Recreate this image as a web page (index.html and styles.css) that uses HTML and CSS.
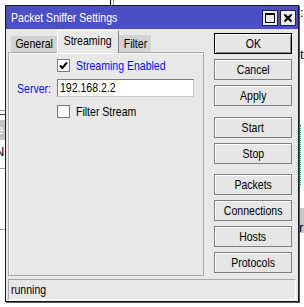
FILE: index.html
```html
<!DOCTYPE html>
<html>
<head>
<meta charset="utf-8">
<link rel="stylesheet" href="styles.css">
</head>
<body>
<div class="desktop">
  <div class="frag frag-topline"></div>
  <div class="frag frag-topline2"></div>
  <div class="frag frag-left-a"></div>
  <div class="frag frag-left-b">e</div>
  <div class="frag frag-left-c">N</div>
  <div class="frag frag-left-d"></div>
  <div class="frag frag-right-a">:</div>
  <div class="frag frag-right-b">t</div>
  <div class="frag frag-right-c"></div>
  <div class="frag frag-right-d">r</div>

  <div class="window">
    <div class="titlebar">
      <span class="title"><span class="t">Packet Sniffer Settings</span></span>
      <div class="tb-btns">
        <span class="tb-btn"><svg width="12" height="12" viewBox="0 0 12 12"><rect x="1.5" y="1.5" width="9" height="9" fill="none" stroke="#000" stroke-width="1"/><rect x="1" y="1" width="10" height="2" fill="#000"/></svg></span>
        <span class="tb-btn"><svg width="12" height="12" viewBox="0 0 12 12"><path d="M2.5 2.5 L9.5 9.5 M9.5 2.5 L2.5 9.5" stroke="#000" stroke-width="2.2" fill="none"/></svg></span>
      </div>
    </div>
    <div class="main">
      <div class="left">
        <div class="tabs">
          <div class="tab tab-general"><span class="tc">General</span></div>
          <div class="tab tab-active"><span class="tc">Streaming</span></div>
          <div class="tab tab-filter"><span class="tc">Filter</span></div>
        </div>
        <div class="panel">
          <div class="form">
            <span></span>
            <label class="check-row">
              <span class="checkbox"><svg width="11" height="11" viewBox="0 0 11 11"><path d="M2 5.5 L4.3 8 L9 2.5" stroke="#000" stroke-width="2" fill="none"/></svg></span>
              <span class="t blue">Streaming Enabled</span>
            </label>
            <span class="lbl"><span class="t blue">Server:</span></span>
            <div class="input"><span class="t">192.168.2.2</span></div>
            <span></span>
            <label class="check-row">
              <span class="checkbox"></span>
              <span class="t">Filter Stream</span>
            </label>
          </div>
        </div>
      </div>
      <div class="buttons">
        <div class="btn btn-default"><span class="tc">OK</span></div>
        <div class="btn"><span class="tc">Cancel</span></div>
        <div class="btn"><span class="tc">Apply</span></div>
        <div class="btn group"><span class="tc">Start</span></div>
        <div class="btn"><span class="tc">Stop</span></div>
        <div class="btn group2"><span class="tc">Packets</span></div>
        <div class="btn"><span class="tc">Connections</span></div>
        <div class="btn"><span class="tc">Hosts</span></div>
        <div class="btn"><span class="tc">Protocols</span></div>
      </div>
    </div>
    <div class="status"><span class="t">running</span></div>
  </div>
</div>
</body>
</html>
```

FILE: styles.css
```css
html, body {
  margin: 0;
  padding: 0;
  background: #ffffff;
}
.desktop {
  position: relative;
  width: 304px;
  height: 307px;
  overflow: hidden;
  font-family: "Liberation Sans", Arial, sans-serif;
  font-size: 13px;
  color: #000;
}
.t {
  display: inline-block;
  transform: scaleX(0.81);
  transform-origin: left center;
  white-space: nowrap;
}
.tc {
  display: inline-block;
  transform: scaleX(0.81);
  transform-origin: center center;
  white-space: nowrap;
}
.frag { position: absolute; font-size: 13px; line-height: 13px; }
.frag-topline { left: 110px; top: 0; width: 1px; height: 5px; background: #000; }
.frag-topline2 { left: 113px; top: 0; width: 1px; height: 5px; background: #999; }
.frag-left-a { left: 0; top: 110px; width: 5px; height: 3px; border-top: 1px solid #999; border-bottom: 1px solid #444; }
.frag-left-b { left: -4px; top: 120px; width: 9px; height: 20px; background: #c4c4c4; color: #fff; line-height: 20px; }
.frag-left-c { left: -5px; top: 145px; width: 10px; }
.frag-left-d { left: 0; top: 168px; width: 5px; height: 60px; border-top: 1px solid #aaa; border-bottom: 1px solid #999; }
.frag-right-a { left: 300px; top: 6px; }
.frag-right-b { left: 300px; top: 48px; }
.frag-right-c { left: 300px; top: 125px; width: 4px; height: 60px; border-left: 1px dotted #0a9; }
.frag-right-d { left: 299px; top: 208px; width: 5px; height: 12px; background: #c8c8c8; padding-top: 13px; }

.window {
  position: absolute;
  left: 5px;
  top: 5px;
  width: 292px;
  height: 295px;
  background: #e8e8e8;
  border: 1px solid #1a1a1a;
  box-shadow: 1px 1px 0 #555;
  display: flex;
  flex-direction: column;
}
.titlebar {
  height: 23px;
  background: #4a4fc6;
  display: flex;
  align-items: center;
  justify-content: space-between;
  padding-left: 5px;
  padding-right: 2px;
  flex: none;
}
.title {
  color: #fff;
  font-size: 13px;
  width: 150px;
}
.tb-btns { display: flex; gap: 2px; }
.tb-btn {
  width: 14px;
  height: 14px;
  background: #ececec;
  border: 1px solid #222;
  display: flex;
  align-items: center;
  justify-content: center;
}
.tb-btn svg { display: block; }
.main {
  display: flex;
  padding: 1px 6px 0 2px;
  gap: 10px;
  flex: none;
  height: 246px;
}
.left {
  width: 196px;
  display: flex;
  flex-direction: column;
}
.tabs {
  display: flex;
  align-items: flex-end;
  padding-left: 3px;
  height: 22px;
  flex: none;
}
.tab {
  text-align: center;
  box-sizing: border-box;
  white-space: nowrap;
}
.tab-general {
  width: 46px;
  height: 16px;
  line-height: 16px;
  background: #d2d2d2;
}
.tab-active {
  width: 62px;
  height: 23px;
  line-height: 19px;
  background: #e8e8e8;
  border-top: 1px solid #fff;
  border-left: 1px solid #fff;
  border-right: 1px solid #888;
  margin-bottom: -1px;
  position: relative;
  z-index: 1;
}
.tab-filter {
  width: 32px;
  height: 17px;
  line-height: 17px;
  background: #d2d2d2;
}
.panel {
  flex: 1;
  border: 1px solid #a8a8a8;
  box-shadow: inset 1px 1px 0 #fff;
  padding: 6px 0 0 8px;
}
.form {
  display: grid;
  grid-template-columns: 40px 137px;
  grid-template-rows: 13px 18px 13px;
  row-gap: 7px;
  align-items: center;
}
.form .check-row:last-child { margin-top: 2px; }
.check-row {
  display: flex;
  align-items: center;
  gap: 6px;
  white-space: nowrap;
}
.checkbox {
  width: 11px;
  height: 11px;
  background: #fff;
  border: 1px solid #7a7a7a;
  display: flex;
  align-items: center;
  justify-content: center;
  flex: none;
}
.checkbox svg { display: block; }
.blue { color: #0a0aff; }
.lbl { white-space: nowrap; }
.input {
  height: 18px;
  box-sizing: border-box;
  background: #fff;
  border: 1px solid #7a7a7a;
  border-right-color: #c8c8c8;
  border-bottom-color: #c8c8c8;
  padding-left: 2px;
  line-height: 16px;
}
.buttons {
  width: 78px;
  padding-top: 3px;
  display: flex;
  flex-direction: column;
  gap: 5px;
}
.btn {
  height: 21px;
  box-sizing: border-box;
  border: 1px solid #7e7e7e;
  box-shadow: inset 1px 1px 0 #fff;
  background: #e6e6e6;
  text-align: center;
  line-height: 19px;
  white-space: nowrap;
}
.btn-default {
  border-color: #000;
  box-shadow: inset 1px 1px 0 #fff, inset -1px -1px 0 #888;
}
.btn.group { margin-top: 6px; }
.btn.group2 { margin-top: 5px; }
.status {
  margin: 3px 2px 0 2px;
  height: 21px;
  box-sizing: border-box;
  border: 1px solid #a8a8a8;
  border-right-color: #fff;
  border-bottom-color: #fff;
  padding-left: 2px;
  line-height: 19px;
}
```
